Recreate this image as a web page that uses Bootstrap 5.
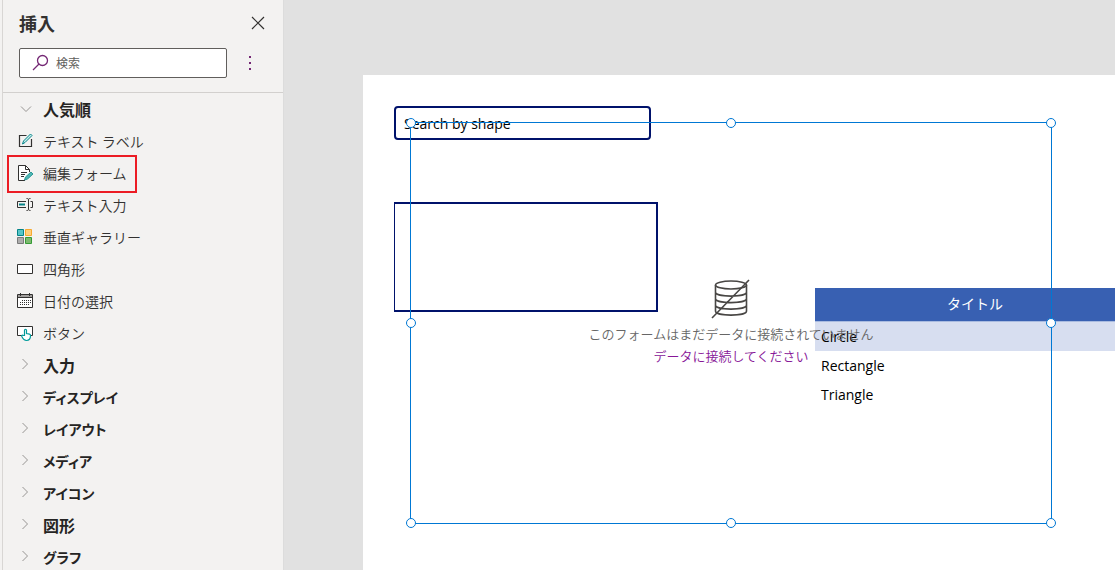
<!DOCTYPE html>
<html lang="ja">
<head>
<meta charset="utf-8">
<meta name="viewport" content="width=device-width, initial-scale=1">
<title>挿入</title>
<link href="https://cdn.jsdelivr.net/npm/bootstrap@5.3.0/dist/css/bootstrap.min.css" rel="stylesheet">
<style>
body { font-family: "Open Sans", "Noto Sans CJK JP", sans-serif; background: #e1e1e1; color: #323130; }
.insert-pane { width: 281px; background: #f3f2f1; border-right: 1px solid #dcdcdc; font-family: "Noto Sans CJK JP", sans-serif; }
.rail { width: 3px; background: #f3f2f1; border-right: 1px solid #d8d6d4; }
.pane-title { font-size: 18px; line-height: 24px; font-weight: 700; }
.pane-head { padding: 11px 16px 14px; border-bottom: 1px solid #d2d0ce; }
.icon-btn { width: 18px; height: 24px; }
.search-row { margin-top: 13px; }
.search-box { width: 208px; height: 30px; background: #fff; border: 1px solid #605e5c; border-radius: 2px; padding-left: 12px; gap: 6px; }
.search-box input { font-size: 12px; outline: 0; min-width: 0; }
.search-box input::placeholder { color: #605e5c; opacity: 1; }
.tree-row { height: 32px; padding: 0 13px; gap: 9px; font-size: 14px; font-weight: 350; line-height: 20px; color: #323130; }
.tree-group { font-size: 16px; font-weight: 700; color: #252423; }
.tree-kana { font-size: 14px; font-feature-settings: "palt"; }
.tree-row svg { width: 18px; height: 18px; flex: none; }
.callout { left: 4px; top: -2px; width: 130px; height: 38px; border: 2px solid #ec1c24; pointer-events: none; }
.stage { padding: 75px 0 0 79px; }
.screen-text { left: 31px; top: 31px; width: 257px; height: 34px; border: 2px solid #00126b; border-radius: 4px; padding: 0 8px; font-size: 14px; color: #000; }
.screen-gallery { left: 31px; top: 127px; width: 264px; height: 110px; border: 2px solid #00126b; border-left-width: 1px; }
.screen-table { left: 452px; top: 213px; width: 320px; font-size: 14px; line-height: 20px; color: #000; }
.screen-table th { height: 33px; background: #3860b2; color: #fff; font-weight: 400; text-align: center; padding: 0; }
.screen-table td { height: 29px; padding: 1px 6px 0; }
.screen-table .picked td { height: 30px; background: #d7def0; border-top: 1px solid #a9bbe0; }
.form-frame { left: 47px; top: 47px; width: 642px; height: 402px; border: 1px solid #0078d4; font-size: 13px; line-height: 22px; color: #666; font-family: "Noto Sans CJK JP", sans-serif; font-weight: 350; }
.form-frame a { color: #881798; }
.handle { width: 10px; height: 10px; border: 1px solid #0078d4; border-radius: 50%; background: #fff; }
</style>
</head>
<body>
<div class="d-flex vh-100 overflow-hidden">
  <div class="rail flex-shrink-0"></div>
  <aside class="insert-pane flex-shrink-0 overflow-hidden">
    <div class="pane-head">
      <div class="d-flex justify-content-between align-items-center">
        <h1 class="pane-title m-0">挿入</h1>
        <button type="button" class="icon-btn btn p-0 border-0 d-flex align-items-center justify-content-center" aria-label="閉じる">
          <svg width="14" height="14" viewBox="0 0 14 14" stroke="#323130" stroke-width="1.200" fill="none"><path d="M1 1l12 12M13 1L1 13"/></svg>
        </button>
      </div>
      <div class="search-row d-flex justify-content-between align-items-center">
        <div class="search-box d-flex align-items-center">
          <svg width="18" height="18" viewBox="0 0 18 18" stroke="#742774" stroke-width="1.3" fill="none"><circle cx="10.500" cy="6.500" r="5"/><path d="M7 10L1 16"/></svg>
          <input type="text" class="border-0 p-0 bg-transparent flex-grow-1" placeholder="検索" aria-label="検索">
        </div>
        <button type="button" class="icon-btn btn p-0 border-0 me-2 d-flex align-items-center justify-content-center" aria-label="その他">
          <svg width="4" height="16" viewBox="0 0 4 16" fill="#742774"><path d="M1 1h2v2H1zM1 7h2v2H1zM1 13h2v2H1z"/></svg>
        </button>
      </div>
    </div>
    <nav class="d-flex flex-column">
      <button type="button" class="tree-row tree-group btn border-0 rounded-0 d-flex align-items-center" aria-expanded="true"><svg viewBox="0 0 18 18" stroke="#979593" fill="none"><path d="M5 6.500l5 5 5-5"/></svg>人気順</button>
      <button type="button" class="tree-row btn border-0 rounded-0 d-flex align-items-center">
        <svg viewBox="0 0 18 18" fill="none"><path d="M10.500 3.500h-7v11h12V7" stroke="#323130" stroke-width="1.200"/><path d="M6.500 12l1-3 7-7 1.500 1.500-7 7z" fill="#c5eceb" stroke="#038387"/></svg>テキスト ラベル</button>
      <button type="button" class="tree-row btn border-0 rounded-0 d-flex align-items-center position-relative">
        <svg viewBox="0 0 18 18" fill="none"><path d="M9 16.500H2.500v-15h7l4 4V8" fill="#fff" stroke="#323130"/><path d="M9.500 1.500v4h4M5 8.500h6M5 10.500h4M5 12.500h3" stroke="#323130"/><path d="M8.500 16l1-3 5.500-5 2 2-5.500 5z" fill="#4fb7b5" stroke="#2b9896"/></svg>編集フォーム
        <span class="callout position-absolute"></span></button>
      <button type="button" class="tree-row btn border-0 rounded-0 d-flex align-items-center">
        <svg viewBox="0 0 18 18" fill="none"><path d="M10 5.500H1.500v6H10M14.500 5.500h2v6h-2" stroke="#323130"/><path d="M3 7.500h6v2H3z" fill="#038387"/><path d="M10.500 2.500c1.500 0 2 .5 2 1v10c0 .5-.5 1-2 1M14.500 2.500c-1.500 0-2 .5-2 1M12.500 13.500c0 .5.500 1 2 1" stroke="#323130"/></svg>テキスト入力</button>
      <button type="button" class="tree-row btn border-0 rounded-0 d-flex align-items-center">
        <svg viewBox="0 0 18 18"><path d="M1.500 1.500h6v6h-6z" fill="#57c5c7" stroke="#038387"/><path d="M9.500 1.500h6v6h-6z" fill="#ffcf7a" stroke="#f7a930"/><path d="M1.500 9.500h6v6h-6z" fill="#adadad" stroke="#7a7a7a"/><path d="M9.500 9.500h6v6h-6z" fill="#7db86f" stroke="#359b35"/></svg>垂直ギャラリー</button>
      <button type="button" class="tree-row btn border-0 rounded-0 d-flex align-items-center">
        <svg viewBox="0 0 18 18"><path d="M1.500 4.500h15v9h-15z" fill="#fff" stroke="#323130"/></svg>四角形</button>
      <button type="button" class="tree-row btn border-0 rounded-0 d-flex align-items-center">
        <svg viewBox="0 0 18 18"><path d="M1.500 2.500h15v13h-15z" fill="#fff" stroke="#323130"/><path d="M2 3h14v2H2z" fill="#a19f9d"/><path d="M2 5.500h14M4.500 1v3M13.500 1v3" stroke="#323130"/><path d="M6 8.500h9M4 10.500h11M4 12.500h9" stroke="#323130" stroke-dasharray="1 1"/></svg>日付の選択</button>
      <button type="button" class="tree-row btn border-0 rounded-0 d-flex align-items-center">
        <svg viewBox="0 0 18 18"><path d="M6 11.500H1.500v-9h15v9H14" fill="#fff" stroke="#323130"/><path d="M8.500 11.500V6.300c0-1.400 2-1.400 2 0v3.200l3 .7c.8.2 1 .6 1 1.300 0 3-1 5-4 5-2.500 0-3.500-1.500-4.800-4.200-.4-1 .9-1.600 1.600-.8z" fill="#fff" stroke="#009b9b" stroke-width="1.200"/></svg>ボタン</button>
      <button type="button" class="tree-row tree-group btn border-0 rounded-0 d-flex align-items-center" aria-expanded="false"><svg viewBox="0 0 18 18" stroke="#979593" fill="none"><path d="M6.500 3l5 5-5 5"/></svg>入力</button>
      <button type="button" class="tree-row tree-group tree-kana btn border-0 rounded-0 d-flex align-items-center" aria-expanded="false"><svg viewBox="0 0 18 18" stroke="#979593" fill="none"><path d="M6.500 3l5 5-5 5"/></svg>ディスプレイ</button>
      <button type="button" class="tree-row tree-group tree-kana btn border-0 rounded-0 d-flex align-items-center" aria-expanded="false"><svg viewBox="0 0 18 18" stroke="#979593" fill="none"><path d="M6.500 3l5 5-5 5"/></svg>レイアウト</button>
      <button type="button" class="tree-row tree-group tree-kana btn border-0 rounded-0 d-flex align-items-center" aria-expanded="false"><svg viewBox="0 0 18 18" stroke="#979593" fill="none"><path d="M6.500 3l5 5-5 5"/></svg>メディア</button>
      <button type="button" class="tree-row tree-group tree-kana btn border-0 rounded-0 d-flex align-items-center" aria-expanded="false"><svg viewBox="0 0 18 18" stroke="#979593" fill="none"><path d="M6.500 3l5 5-5 5"/></svg>アイコン</button>
      <button type="button" class="tree-row tree-group btn border-0 rounded-0 d-flex align-items-center" aria-expanded="false"><svg viewBox="0 0 18 18" stroke="#979593" fill="none"><path d="M6.500 3l5 5-5 5"/></svg>図形</button>
      <button type="button" class="tree-row tree-group tree-kana btn border-0 rounded-0 d-flex align-items-center" aria-expanded="false"><svg viewBox="0 0 18 18" stroke="#979593" fill="none"><path d="M6.500 3l5 5-5 5"/></svg>グラフ</button>
    </nav>
  </aside>
  <main class="stage flex-grow-1 overflow-hidden d-flex">
    <div class="bg-white position-relative flex-grow-1 overflow-hidden">
      <input type="text" class="screen-text position-absolute bg-white" value="Search by shape" aria-label="Search by shape">
      <div class="screen-gallery position-absolute"></div>
      <table class="screen-table position-absolute">
        <thead><tr><th scope="col">タイトル</th></tr></thead>
        <tbody>
          <tr class="picked"><td>Circle</td></tr>
          <tr><td>Rectangle</td></tr>
          <tr><td>Triangle</td></tr>
        </tbody>
      </table>
      <section class="form-frame position-absolute d-flex flex-column align-items-center justify-content-center">
        <svg class="mb-1" width="40" height="40" viewBox="0 0 40 40" fill="none" stroke="#484644" stroke-width="1.600"><ellipse cx="20" cy="6" rx="15.500" ry="4"/><path d="M4.500 6v26c0 5.500 31 5.500 31 0V6M4.500 13c0 5.500 31 5.500 31 0M4.500 19.500c0 5.500 31 5.500 31 0M4.500 26c0 5.500 31 5.500 31 0M1 39L38 1"/></svg>
        <div>このフォームはまだデータに接続されていません</div>
        <a href="#" class="text-decoration-none">データに接続してください</a>
        <span class="handle position-absolute top-0 start-0 translate-middle"></span>
        <span class="handle position-absolute top-0 start-50 translate-middle"></span>
        <span class="handle position-absolute top-0 start-100 translate-middle"></span>
        <span class="handle position-absolute top-50 start-0 translate-middle"></span>
        <span class="handle position-absolute top-50 start-100 translate-middle"></span>
        <span class="handle position-absolute top-100 start-0 translate-middle"></span>
        <span class="handle position-absolute top-100 start-50 translate-middle"></span>
        <span class="handle position-absolute top-100 start-100 translate-middle"></span>
      </section>
    </div>
  </main>
</div>
<script src="https://cdn.jsdelivr.net/npm/bootstrap@5.3.0/dist/js/bootstrap.bundle.min.js"></script>
</body>
</html>
